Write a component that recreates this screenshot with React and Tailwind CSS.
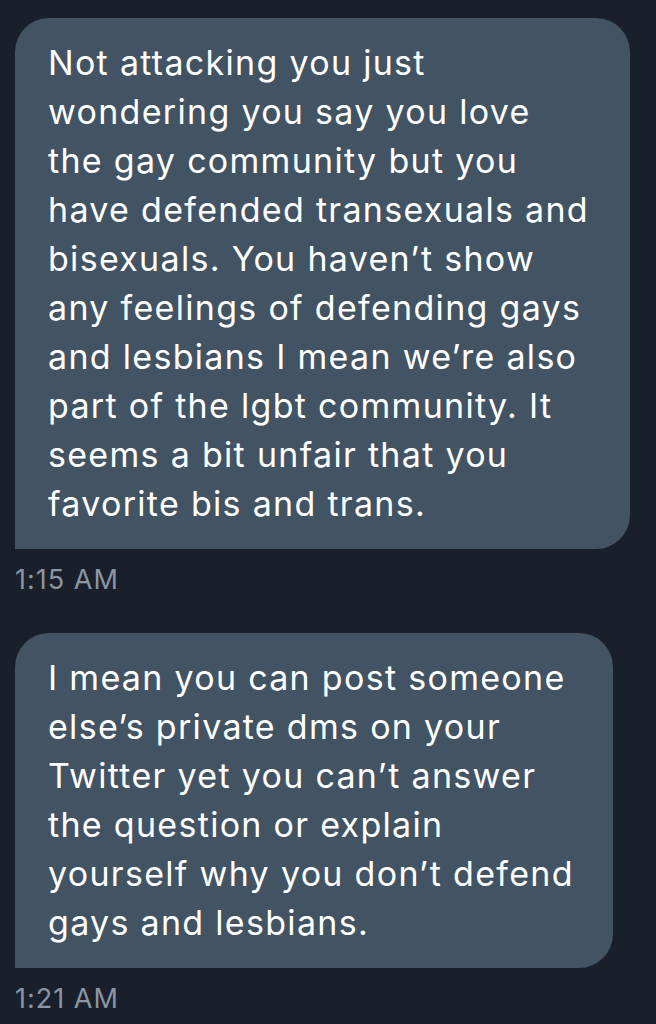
import React from 'react';

const messages = [
  {
    lines: [
      'Not attacking you just',
      'wondering you say you love',
      'the gay community but you',
      'have defended transexuals and',
      'bisexuals. You haven\u2019t show',
      'any feelings of defending gays',
      'and lesbians I mean we\u2019re also',
      'part of the lgbt community. It',
      'seems a bit unfair that you',
      'favorite bis and trans.',
    ],
    time: '1:15 AM',
    width: 'w-[615px]',
  },
  {
    lines: [
      'I mean you can post someone',
      'else\u2019s private dms on your',
      'Twitter yet you can\u2019t answer',
      'the question or explain',
      'yourself why you don\u2019t defend',
      'gays and lesbians.',
    ],
    time: '1:21 AM',
    width: 'w-[598px]',
  },
];

const Bubble = ({ lines, time, width }) => (
  <div className="flex flex-col">
    <div className={`${width} bg-[#425363] rounded-[34px] rounded-bl-none pl-[33px] pr-4 pt-[20px] pb-[21px]`}>
      {lines.map((l, i) => (
        <div key={i} className="text-white text-[34px] leading-[49px] tracking-[1.3px] whitespace-nowrap">
          {l}
        </div>
      ))}
    </div>
    <span className="mt-[13px] text-[#8a96a3] text-[27px] leading-[36px] tracking-[1px]">{time}</span>
  </div>
);

export default function App() {
  return (
    <div className="w-[656px] h-[1024px] bg-[#19202b] overflow-hidden px-[15px] pt-[18px] flex flex-col gap-[35px] font-['Inter',sans-serif]">
      {messages.map((m, i) => (
        <Bubble key={i} {...m} />
      ))}
    </div>
  );
}
